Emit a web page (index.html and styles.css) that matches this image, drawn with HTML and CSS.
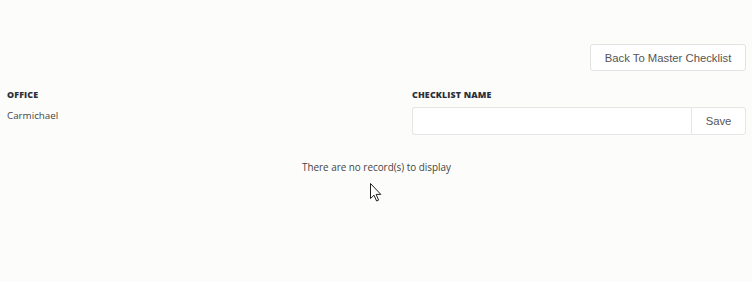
FILE: index.html
```html
<!DOCTYPE html>
<html lang="en">
<head>
    <meta charset="UTF-8">
    <title>Checklist</title>
    <link rel="stylesheet" href="styles.css">
</head>
<body>
    <div class="page">
        <div class="toolbar">
            <button class="btn">Back To Master Checklist</button>
        </div>

        <div class="form-row">
            <div class="field">
                <label>OFFICE</label>
                <div class="value">Carmichael</div>
            </div>
            <div class="field">
                <label>CHECKLIST NAME</label>
                <div class="input-group">
                    <input type="text" class="input">
                    <button class="addon">Save</button>
                </div>
            </div>
        </div>

        <div class="empty">There are no record(s) to display</div>
    </div>

    <svg class="cursor" width="12" height="19" viewBox="0 0 12 19">
        <path d="M0.5 0.5 L0.5 15.5 L4 12.2 L6.6 18 L8.6 17.1 L6.1 11.4 L10.8 11.4 Z" fill="#fff" stroke="#222" stroke-width="1"/>
    </svg>
</body>
</html>
```

FILE: styles.css
```css
body {
    margin: 0;
    background: #fcfcfa;
    font-family: "Open Sans", sans-serif;
    color: #444;
}
.page {
    padding: 44px 6px 0 7px;
}
.toolbar {
    display: flex;
    justify-content: flex-end;
}
.btn {
    height: 27px;
    width: 156px;
    padding: 0;
    background: #fff;
    border: 1px solid #e3e3e3;
    border-radius: 3px;
    font-family: "Liberation Sans", Arial, sans-serif;
    font-size: 11.3px;
    color: #555;
}
.form-row {
    display: grid;
    grid-template-columns: 1fr 334px;
    margin-top: 18px;
}
.field label {
    display: block;
    font-family: "Open Sans", sans-serif;
    font-weight: 800;
    font-size: 8.9px;
    letter-spacing: 0.15px;
    color: #2b303b;
    line-height: 12px;
}
.value {
    margin-top: 8px;
    font-size: 9.8px;
    color: #444;
}
.input-group {
    display: flex;
    margin-top: 6px;
    height: 28px;
}
.input {
    flex: 1;
    min-width: 0;
    margin: 0;
    background: #fff;
    border: 1px solid #e6e6e6;
    border-right: none;
    border-radius: 3px 0 0 3px;
}
.addon {
    width: 55px;
    padding: 0;
    background: #fff;
    border: 1px solid #e6e6e6;
    border-radius: 0 3px 3px 0;
    font-family: "Liberation Sans", Arial, sans-serif;
    font-size: 11.3px;
    color: #555;
}
.empty {
    margin-top: 25px;
    text-align: center;
    font-size: 9.9px;
    color: #444;
}
.cursor {
    position: absolute;
    left: 370px;
    top: 183px;
}
```
